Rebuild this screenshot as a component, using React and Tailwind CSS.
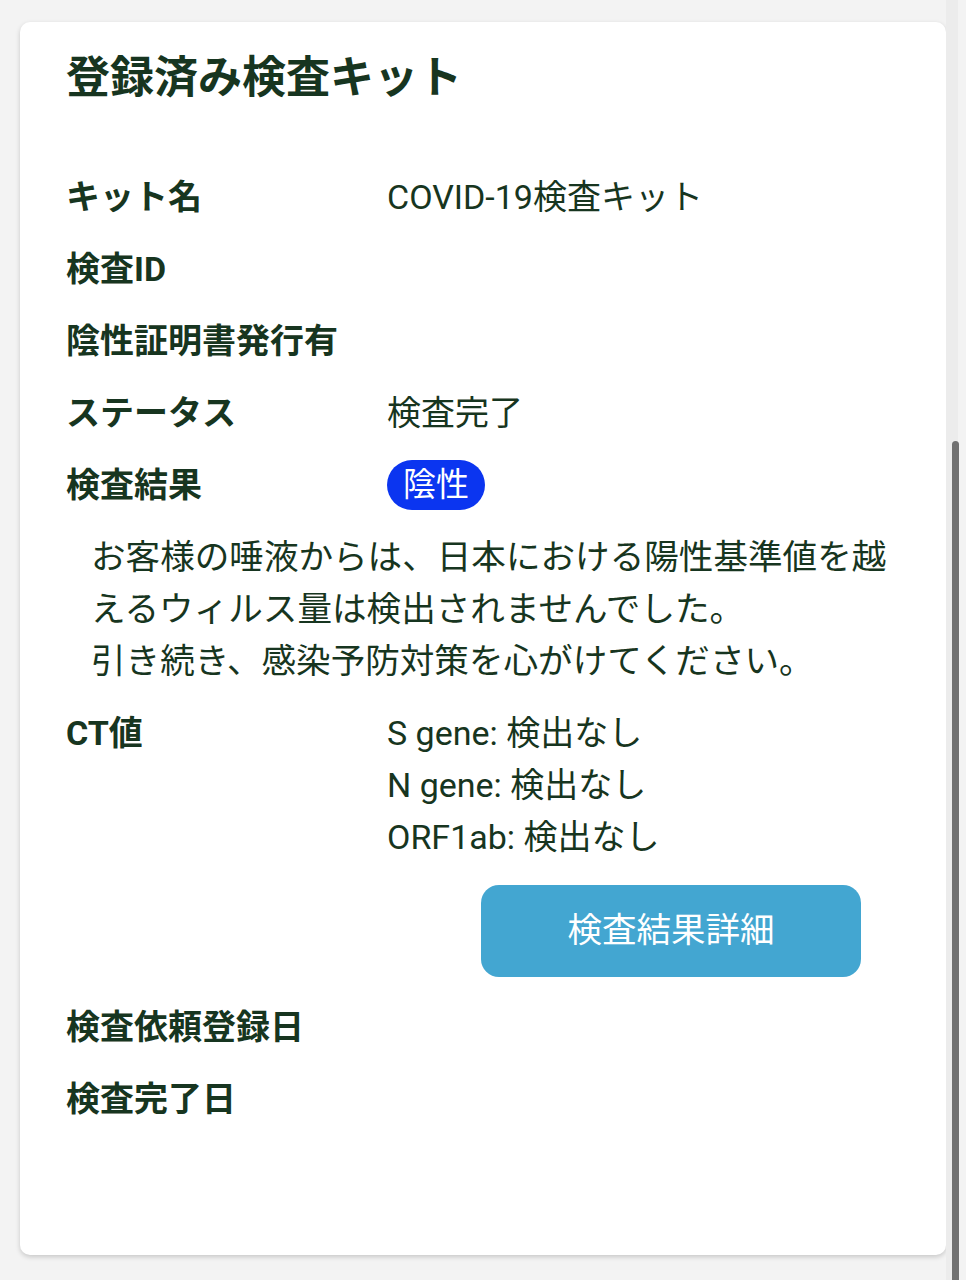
import React from 'react'

const font = { fontFamily: 'Roboto, "Noto Sans CJK JP", sans-serif' }

function Row({ label, children }) {
  return (
    <div className="flex h-[72px] items-center">
      <div className="w-[321px] shrink-0 font-bold">{label}</div>
      <div className="flex items-center">{children}</div>
    </div>
  )
}

export default function App() {
  return (
    <div
      className="relative h-[1280px] overflow-hidden bg-[#f3f3f3] pt-[22px] pl-[20px] text-[#173520]"
      style={font}
    >
      <div className="w-[926px] h-[1233px] rounded-[10px] bg-white px-[46px] pt-[28px] shadow-[0_2px_5px_rgba(0,0,0,0.18)] text-[34px]">
        <h1 className="text-[44px] font-bold leading-[56px]">登録済み検査キット</h1>

        <div className="mt-[55px]">
          <Row label="キット名">COVID-19検査キット</Row>
          <Row label="検査ID"></Row>
          <Row label="陰性証明書発行有"></Row>
          <Row label="ステータス">検査完了</Row>
          <Row label="検査結果">
            <span className="rounded-full bg-[#0b35f0] px-[16px] text-[33px] text-white leading-[50px]">
              陰性
            </span>
          </Row>
        </div>

        <p className="mt-[10px] pl-[25px] leading-[52px] text-[34.6px]">
          お客様の唾液からは、日本における陽性基準値を越
          <br />
          えるウィルス量は検出されませんでした。
          <br />
          引き続き、感染予防対策を心がけてください。
        </p>

        <div className="mt-[20px] flex leading-[52px]">
          <div className="w-[321px] shrink-0 font-bold">CT値</div>
          <div>
            <div>S gene: 検出なし</div>
            <div>N gene: 検出なし</div>
            <div>ORF1ab: 検出なし</div>
          </div>
        </div>

        <div className="mt-[22px] flex justify-end pr-[39px]">
          <button className="h-[92px] w-[380px] rounded-[18px] bg-[#43a6d1] text-[34.5px] text-white">
            検査結果詳細
          </button>
        </div>

        <div className="mt-[14px]">
          <Row label="検査依頼登録日"></Row>
          <Row label="検査完了日"></Row>
        </div>
      </div>

      {/* scrollbar */}
      <div className="absolute right-[8px] top-0 h-full w-[12px] bg-[#ececec]" />
      <div className="absolute right-[7px] top-[441px] h-[850px] w-[7px] rounded-t-full bg-[#717171]" />
    </div>
  )
}
